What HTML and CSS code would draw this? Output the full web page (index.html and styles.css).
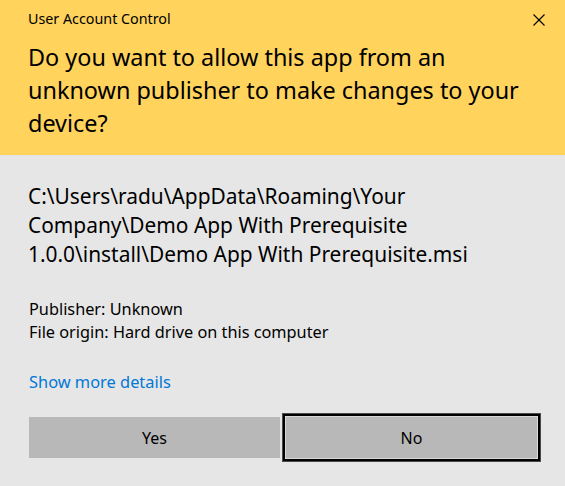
FILE: index.html
```html
<!DOCTYPE html>
<html>
<head>
<meta charset="utf-8">
<link rel="stylesheet" href="styles.css">
</head>
<body>
<div class="dialog">
  <header class="banner">
    <div class="titlebar">
      <span class="title">User Account Control</span>
      <svg class="close" width="12" height="12" viewBox="0 0 12 12"><path d="M0.5 0.5 L11.5 11.5 M11.5 0.5 L0.5 11.5" stroke="#000" stroke-width="1.1" fill="none"/></svg>
    </div>
    <h1 class="question">Do you want to allow this app from an unknown publisher to make changes to your device?</h1>
  </header>
  <main class="content">
    <p class="path">C:\Users\radu\AppData\Roaming\Your Company\Demo App With Prerequisite 1.0.0\install\Demo App With Prerequisite.msi</p>
    <div class="meta">
      <div>Publisher: Unknown</div>
      <div>File origin: Hard drive on this computer</div>
    </div>
    <a class="details" href="#">Show more details</a>
    <div class="buttons">
      <button class="btn">Yes</button>
      <button class="btn focused">No</button>
    </div>
  </main>
</div>
</body>
</html>
```
FILE: styles.css
```css
html, body {
  margin: 0;
  padding: 0;
}
body {
  width: 565px;
  height: 486px;
  background: #e6e6e6;
  font-family: "Noto Sans", "Open Sans", sans-serif;
  color: #000;
  overflow: hidden;
}
.banner {
  background: #ffd35c;
  height: 155px;
  box-sizing: border-box;
  padding: 9px 20px 0 28px;
}
.titlebar {
  display: flex;
  justify-content: space-between;
  align-items: flex-start;
  height: 20px;
}
.title {
  font-size: 14.3px;
  line-height: 20px;
}
.close {
  margin-top: 5px;
}
.question {
  margin: 12px 0 0 0;
  font-size: 23.4px;
  line-height: 33px;
  font-weight: normal;
  width: 509px;
}
.content {
  padding: 27px 28px 0 29px;
}
.path {
  margin: 0 0 0 -1px;
  font-size: 20.9px;
  line-height: 29px;
  width: 509px;
}
.meta {
  margin-top: 29px;
  font-size: 16.3px;
  line-height: 23px;
}
.details {
  display: block;
  margin-top: 26px;
  font-size: 16.4px;
  line-height: 23px;
  color: #0078d7;
  text-decoration: none;
  width: max-content;
}
.buttons {
  display: flex;
  gap: 6px;
  margin-top: 24px;
}
.btn {
  width: 251px;
  height: 41px;
  border: none;
  background: #b8b8b8;
  font-family: inherit;
  font-size: 16px;
  color: #000;
  padding: 0;
}
.focused {
  box-shadow: 0 0 0 1px #d8d8d8, 0 0 0 3px #000, 0 0 0 4px #4a4a4a;
}
```
